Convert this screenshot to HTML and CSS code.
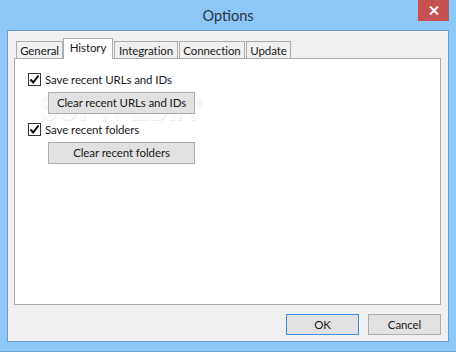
FILE: index.html
```html
<!DOCTYPE html>
<html lang="en">
<head>
	<meta charset="UTF-8">
	<title>Options</title>
	<link rel="stylesheet" href="styles.css">
</head>
<body>
	<div class="window">
		<div class="titlebar">
			<span class="title">Options</span>
			<div class="close">
				<svg width="10" height="9" viewBox="0 0 10 9"><path d="M1 0.5 L9 8.5 M9 0.5 L1 8.5" stroke="#fff" stroke-width="2"/></svg>
			</div>
		</div>
		<div class="client">
			<div class="tabs">
				<div class="tab t-general">General</div>
				<div class="tab t-history active">History</div>
				<div class="tab t-integration">Integration</div>
				<div class="tab t-connection">Connection</div>
				<div class="tab t-update">Update</div>
			</div>
			<div class="panel">
				<div class="watermark">SOFTPEDIA<sup>®</sup></div>
				<label class="check">
					<span class="box"><svg width="11" height="11" viewBox="0 0 11 11"><path d="M1.5 5.5 L4.2 8.5 L9.5 1.5" fill="none" stroke="#000" stroke-width="2"/></svg></span>
					Save recent URLs and IDs
				</label>
				<div class="btn wide">Clear recent URLs and IDs</div>
				<label class="check second">
					<span class="box"><svg width="11" height="11" viewBox="0 0 11 11"><path d="M1.5 5.5 L4.2 8.5 L9.5 1.5" fill="none" stroke="#000" stroke-width="2"/></svg></span>
					Save recent folders
				</label>
				<div class="btn wide">Clear recent folders</div>
			</div>
			<div class="footer">
				<div class="btn ok">OK</div>
				<div class="btn">Cancel</div>
			</div>
		</div>
	</div>
</body>
</html>
```

FILE: styles.css
```css
html,
body {
	margin: 0;
	padding: 0;
	width: 456px;
	height: 352px;
	overflow: hidden;
}
body {
	font-family: Lato, "Liberation Sans", sans-serif;
	font-size: 11.5px;
	letter-spacing: -0.1px;
	color: #1a1a1a;
	white-space: nowrap;
}
.window {
	box-sizing: border-box;
	width: 456px;
	height: 352px;
	background: #8bc7f7;
	border-bottom: 1px solid #6e9fcc;
	padding: 0 7px 9px 7px;
	display: flex;
	flex-direction: column;
}
.titlebar {
	position: relative;
	height: 30px;
	flex: none;
	display: flex;
	justify-content: center;
}
.title {
	font-size: 14.5px;
	letter-spacing: 0;
	color: #2b3540;
	line-height: 30px;
	margin-top: 1px;
}
.close {
	position: absolute;
	top: 0;
	right: 0;
	width: 31px;
	height: 21px;
	background: #c75050;
	display: flex;
	align-items: center;
	justify-content: center;
}
.client {
	flex: 1;
	border: 1px solid #6e9fcc;
	background: #f0f0f0;
	padding: 7px 7px 6px 6px;
	display: flex;
	flex-direction: column;
}
.tabs {
	display: flex;
	align-items: flex-end;
	height: 20px;
	padding-left: 2px;
	position: relative;
	z-index: 1;
}
.tab {
	box-sizing: border-box;
	height: 17px;
	border: 1px solid #acacac;
	border-bottom: none;
	background: #f0f0f0;
	text-align: center;
	line-height: 17px;
	margin-right: 1px;
}
.tab.active {
	height: 21px;
	margin-bottom: -1px;
	background: #fff;
	line-height: 17px;
}
.t-general { width: 47px; margin-right: 0; }
.t-history { width: 50px; }
.t-integration { width: 64px; }
.t-connection { width: 66px; }
.t-update { width: 45px; }
.panel {
	position: relative;
	flex: 1;
	background: #fff;
	border: 1px solid #acacac;
	padding: 13px 0 0 13px;
	display: flex;
	flex-direction: column;
	align-items: flex-start;
}
.check {
	position: relative;
	display: flex;
	align-items: center;
	height: 13px;
	line-height: 13px;
	margin-top: 1px;
}
.check.second {
	margin-top: 9px;
}
.box {
	box-sizing: border-box;
	width: 13px;
	height: 13px;
	border: 1px solid #333;
	background: #fff;
	margin-right: 4px;
	display: flex;
	align-items: center;
	justify-content: center;
}
.box svg {
	display: block;
}
.btn {
	position: relative;
	box-sizing: border-box;
	width: 73px;
	height: 21px;
	border: 1px solid #adadad;
	background: #e1e1e1;
	text-align: center;
	line-height: 19px;
}
.btn.wide {
	width: 147px;
	height: 22px;
	margin: 6px 0 0 20px;
	line-height: 20px;
}
.footer {
	display: flex;
	justify-content: flex-end;
	gap: 9px;
	margin-top: 9px;
}
.btn.ok {
	border-color: #3d8ee0;
}
.watermark {
	position: absolute;
	left: 24px;
	top: 26px;
	font-family: "Liberation Sans", sans-serif;
	font-weight: bold;
	font-size: 36px;
	line-height: 36px;
	letter-spacing: 0;
	transform: scaleX(0.76);
	transform-origin: left top;
	color: #fbfbfb;
	text-shadow: 1px 1px 0 #ececec;
	pointer-events: none;
}
.watermark sup {
	font-size: 12px;
	font-weight: normal;
}
```
